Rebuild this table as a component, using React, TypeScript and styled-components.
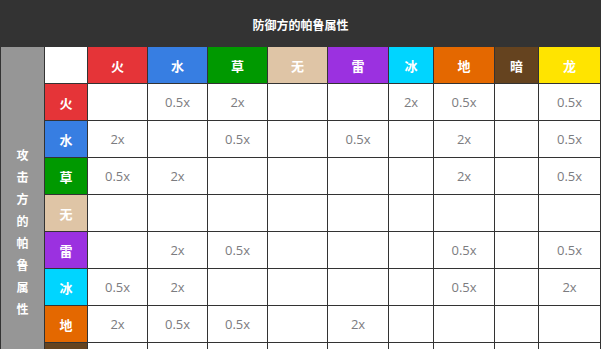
import React from "react";
import styled, { createGlobalStyle } from "styled-components";

const GlobalStyle = createGlobalStyle`
  html, body {
    margin: 0;
    padding: 0;
    background: #fff;
    overflow: hidden;
  }
  body {
    font-family: "Open Sans", "Noto Sans CJK SC", sans-serif;
  }
`;

// type colours
const TYPES = [
  { name: "火", color: "#e53438" },
  { name: "水", color: "#377ee2" },
  { name: "草", color: "#009900" },
  { name: "无", color: "#dfc5a6" },
  { name: "雷", color: "#9b31e0" },
  { name: "冰", color: "#00d5ff" },
  { name: "地", color: "#e46800" },
  { name: "暗", color: "#65431f" },
  { name: "龙", color: "#ffe400" },
];

// attacker row -> multiplier against each defender column
const CHART: string[][] = [
  ["", "0.5x", "2x", "", "", "2x", "0.5x", "", "0.5x"],
  ["2x", "", "0.5x", "", "0.5x", "", "2x", "", "0.5x"],
  ["0.5x", "2x", "", "", "", "", "2x", "", "0.5x"],
  ["", "", "", "", "", "", "", "", ""],
  ["", "2x", "0.5x", "", "", "", "0.5x", "", "0.5x"],
  ["0.5x", "2x", "", "", "", "", "0.5x", "", "2x"],
  ["2x", "0.5x", "0.5x", "", "2x", "", "", "", ""],
  ["", "", "", "", "", "", "", "", ""],
  ["", "", "", "", "", "", "", "", ""],
];

const SIDE_LABEL = "攻击方的帕鲁属性";

const Board = styled.div`
  display: grid;
  grid-template-columns: 43px 42px 59px 59px 59px 59px 60px 44px 60px 43px 61px;
  grid-template-rows: 45px;
  grid-auto-rows: 36px;
  gap: 1px;
  padding: 1px;
  width: 601px;
  box-sizing: border-box;
  background: #333;
`;

const Title = styled.div`
  grid-column: 1 / -1;
  display: flex;
  align-items: center;
  justify-content: center;
  padding-top: 1px;
  background: #333;
  color: #fff;
  font-family: "Noto Sans CJK SC", sans-serif;
  font-size: 12px;
  font-weight: bold;
`;

const SideHead = styled.div`
  grid-column: 1;
  grid-row: 2 / span 10;
  display: flex;
  flex-direction: column;
  align-items: center;
  justify-content: center;
  background: #969696;
  color: #fff;
  font-family: "Noto Sans CJK SC", sans-serif;
  font-size: 12px;
  font-weight: bold;
  line-height: 22px;
`;

const Corner = styled.div`
  background: #fff;
`;

const TypeCell = styled.div<{ $color: string }>`
  display: flex;
  align-items: center;
  justify-content: center;
  background: ${(p) => p.$color};
  color: #fff;
  font-family: "Noto Sans CJK SC", sans-serif;
  font-size: 13px;
  font-weight: bold;
`;

const Value = styled.div`
  display: flex;
  align-items: center;
  justify-content: center;
  background: #fff;
  color: #7c7c80;
  font-family: "Open Sans", sans-serif;
  font-size: 13px;
`;

export default function App() {
  return (
    <>
      <GlobalStyle />
      <Board>
        <Title>防御方的帕鲁属性</Title>
        <SideHead>
          {SIDE_LABEL.split("").map((ch, i) => (
            <span key={i}>{ch}</span>
          ))}
        </SideHead>
        <Corner />
        {TYPES.map((t) => (
          <TypeCell key={"h" + t.name} $color={t.color}>
            {t.name}
          </TypeCell>
        ))}
        {TYPES.map((t, r) => (
          <React.Fragment key={"r" + t.name}>
            <TypeCell $color={t.color}>{t.name}</TypeCell>
            {CHART[r].map((v, c) => (
              <Value key={c}>{v}</Value>
            ))}
          </React.Fragment>
        ))}
      </Board>
    </>
  );
}
